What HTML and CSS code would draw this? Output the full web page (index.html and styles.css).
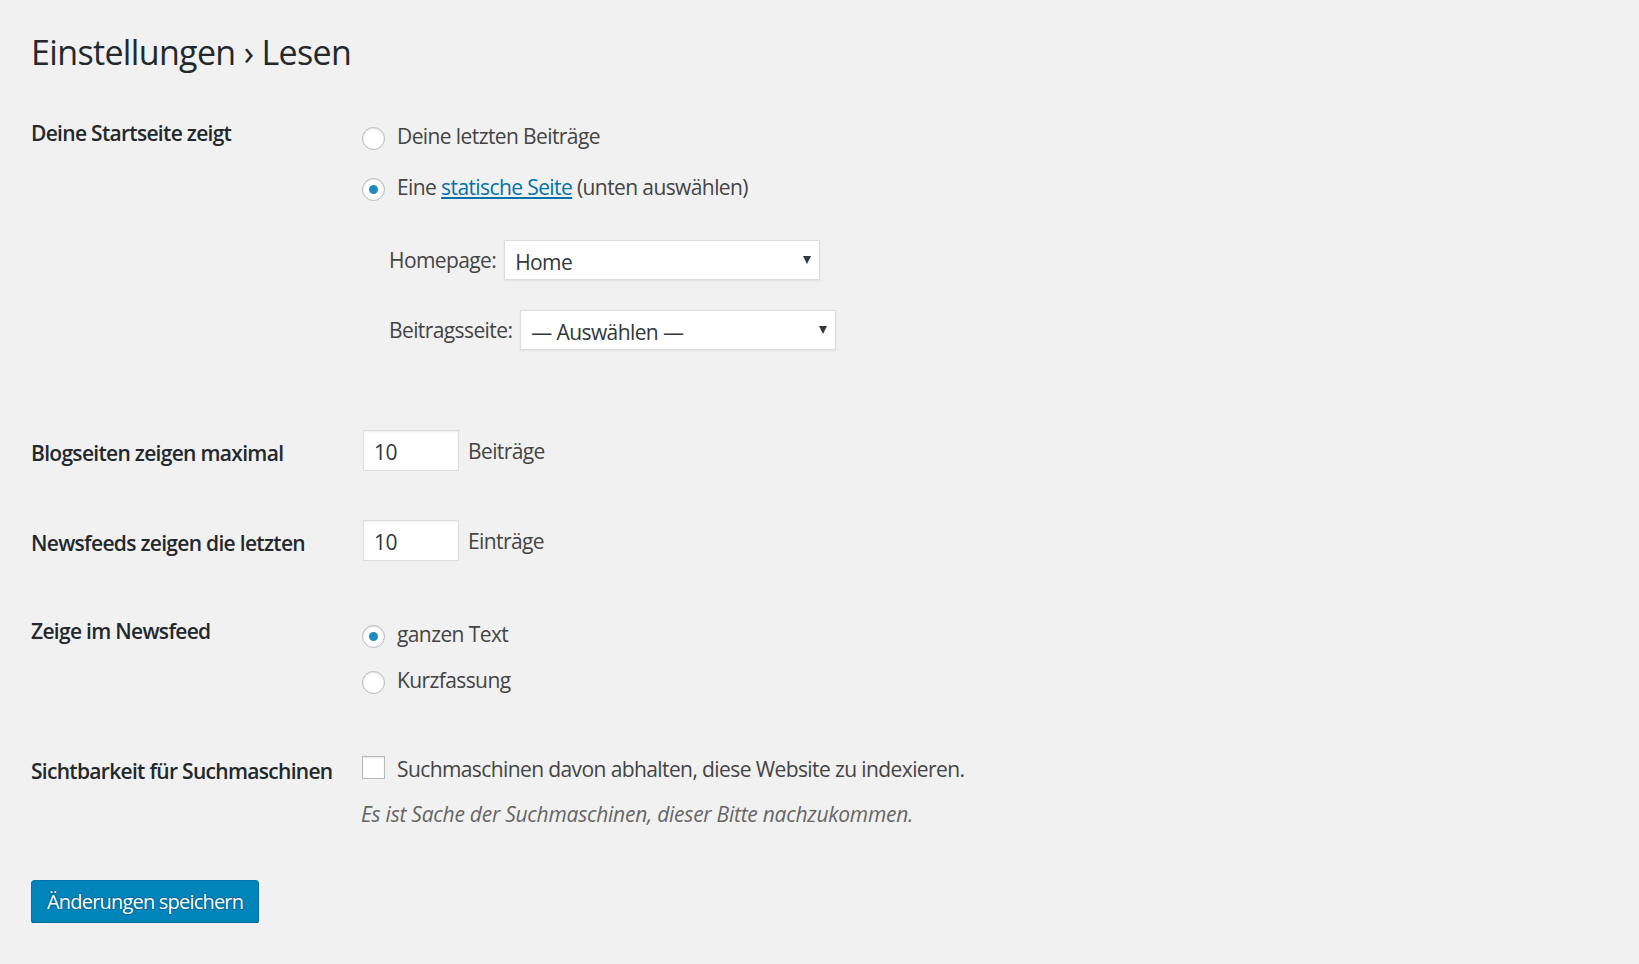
FILE: index.html
```html
<!DOCTYPE html>
<html lang="de">
<head>
<meta charset="utf-8">
<title>Einstellungen › Lesen</title>
<link rel="stylesheet" href="styles.css">
</head>
<body>
<div class="wrap">
  <h1 class="page-title">Einstellungen › Lesen</h1>
  <form class="form">
    <div class="row row-front">
      <div class="th">Deine Startseite zeigt</div>
      <div class="td td-top">
        <label class="opt"><span class="radio"></span><span>Deine letzten Beiträge</span></label>
        <label class="opt opt-gap"><span class="radio checked"></span><span>Eine <a class="link" href="#">statische Seite</a> (unten auswählen)</span></label>
        <div class="sel-line sel-home">
          <span class="sel-label">Homepage:</span>
          <span class="select"><span class="sel-text">Home</span><span class="arrow"></span></span>
        </div>
        <div class="sel-line sel-posts">
          <span class="sel-label">Beitragsseite:</span>
          <span class="select"><span class="sel-text">— Auswählen —</span><span class="arrow"></span></span>
        </div>
      </div>
    </div>

    <div class="row row-center row-blog">
      <div class="th">Blogseiten zeigen maximal</div>
      <div class="td td-inline">
        <span class="input">10</span><span class="unit">Beiträge</span>
      </div>
    </div>

    <div class="row row-center row-feed">
      <div class="th">Newsfeeds zeigen die letzten</div>
      <div class="td td-inline">
        <span class="input">10</span><span class="unit">Einträge</span>
      </div>
    </div>

    <div class="row row-show">
      <div class="th">Zeige im Newsfeed</div>
      <div class="td td-top">
        <label class="opt"><span class="radio checked"></span><span>ganzen Text</span></label>
        <label class="opt opt-gap-small"><span class="radio"></span><span>Kurzfassung</span></label>
      </div>
    </div>

    <div class="row row-seo">
      <div class="th">Sichtbarkeit für Suchmaschinen</div>
      <div class="td">
        <label class="opt"><span class="checkbox"></span><span>Suchmaschinen davon abhalten, diese Website zu indexieren.</span></label>
        <p class="desc">Es ist Sache der Suchmaschinen, dieser Bitte nachzukommen.</p>
      </div>
    </div>

    <div class="submit">
      <button type="button" class="button-primary">Änderungen speichern</button>
    </div>
  </form>
</div>
</body>
</html>
```

FILE: styles.css
```css
html, body {
  margin: 0;
  padding: 0;
  background: #f1f1f1;
}

body {
  font-family: "Open Sans", "Noto Sans", sans-serif;
  color: #444;
  font-size: 21px;
  line-height: 30px;
  letter-spacing: -0.6px;
}

.wrap {
  padding: 30px 0 0 31px;
}

.page-title {
  margin: 0;
  font-size: 34px;
  line-height: 44px;
  font-weight: 400;
  color: #23282d;
  letter-spacing: -0.65px;
}

.form {
  display: flex;
  flex-direction: column;
}

.row {
  display: flex;
}

.row-center {
  align-items: center;
}

.th {
  width: 330px;
  flex: none;
  font-weight: 600;
  color: #23282d;
  line-height: 30px;
  letter-spacing: -0.7px;
}

.row-center .th {
  padding-top: 4px;
}

.row-seo .th {
  padding-top: 2px;
}

.td {
  display: flex;
  flex-direction: column;
}

.td-top {
  padding-top: 3px;
}

.td-inline {
  flex-direction: row;
  align-items: center;
}

.row-front { margin-top: 44px; }
.row-blog { margin-top: 80px; }
.row-feed { margin-top: 49px; }
.row-show { margin-top: 55px; }
.row-seo { margin-top: 59px; }

.opt {
  display: flex;
  align-items: center;
  height: 30px;
  white-space: nowrap;
}

.opt-gap { margin-top: 21px; }
.opt-gap-small { margin-top: 16px; }

.radio {
  width: 23px;
  height: 23px;
  box-sizing: border-box;
  border: 1.5px solid #b4b9be;
  border-radius: 50%;
  background: #fff;
  box-shadow: inset 0 1px 2px rgba(0, 0, 0, 0.1);
  margin: 4px 12px 0 1px;
  flex: none;
  display: flex;
  align-items: center;
  justify-content: center;
}

.radio.checked::before {
  content: "";
  width: 9px;
  height: 9px;
  border-radius: 50%;
  background: #1e8cbe;
}

.checkbox {
  width: 23px;
  height: 23px;
  box-sizing: border-box;
  border: 1.5px solid #b4b9be;
  background: #fff;
  box-shadow: inset 0 1px 2px rgba(0, 0, 0, 0.1);
  margin: -4px 12px 0 1px;
  flex: none;
}

.link {
  color: #0073aa;
  text-decoration: underline;
}

.sel-line {
  display: flex;
  align-items: center;
  padding-left: 28px;
}

.sel-home { margin-top: 38px; }
.sel-posts { margin-top: 30px; }

.sel-label {
  margin-right: 8px;
}

.select {
  width: 316px;
  height: 40px;
  box-sizing: border-box;
  border: 1.5px solid #ddd;
  background: #fff;
  box-shadow: 0 1px 2px rgba(0, 0, 0, 0.07);
  display: flex;
  align-items: center;
  justify-content: space-between;
  padding: 4px 8px 0 10px;
  color: #32373c;
}

.arrow {
  width: 0;
  height: 0;
  border-left: 4.5px solid transparent;
  border-right: 4.5px solid transparent;
  border-top: 8px solid #32373c;
  margin-top: -4px;
}

.input {
  width: 96px;
  height: 41px;
  box-sizing: border-box;
  border: 1.5px solid #ddd;
  background: #fff;
  box-shadow: inset 0 1px 2px rgba(0, 0, 0, 0.07);
  padding: 2px 0 0 10px;
  margin-left: 2px;
  display: flex;
  align-items: center;
  color: #32373c;
}

.unit {
  margin-left: 9px;
}

.desc {
  margin: 15px 0 0;
  font-style: italic;
  color: #666;
  letter-spacing: -0.25px;
}

.submit {
  margin-top: 51px;
}

.button-primary {
  font-family: inherit;
  font-size: 20px;
  letter-spacing: -0.8px;
  line-height: 30px;
  height: 43px;
  padding: 0 15px;
  color: #fff;
  background: #0085ba;
  border: 1px solid #0073aa;
  border-bottom-color: #006799;
  border-radius: 4px;
  box-shadow: 0 1px 0 #006799;
  text-shadow: 0 -1px 1px #006799, 1px 0 1px #006799, 0 1px 1px #006799, -1px 0 1px #006799;
  cursor: pointer;
}
```
